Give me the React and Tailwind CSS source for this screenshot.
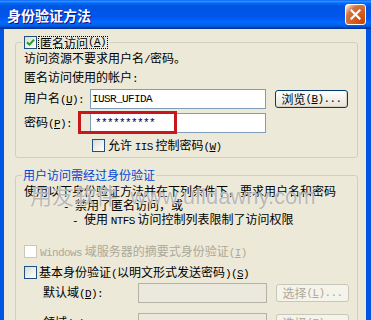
import React from "react";

const H = ({ children, className = "" }) => (
  <span className={`font-['Liberation_Mono',monospace] text-[11px] tracking-[-0.6px] ${className}`}>{children}</span>
);

const Check = ({ checked, disabled }) => (
  <span
    className={`w-[13px] h-[13px] border shrink-0 flex items-center justify-center ${
      disabled ? "border-[#cac8bb] bg-white" : "border-[#1c5180] bg-linear-to-br from-[#dcdcd5] to-white"
    }`}
  >
    {checked && (
      <svg width="9" height="9" viewBox="0 0 9 9">
        <path d="M1 4.2 L3.4 6.6 L8 1.8" stroke="#21a121" strokeWidth="2" fill="none" />
      </svg>
    )}
  </span>
);

const Btn = ({ children, disabled }) => (
  <div
    className={`w-[73px] h-[18px] rounded-[3px] border flex items-center justify-center leading-none ${
      disabled
        ? "border-[#c9c7ba] text-[#aca899] bg-[#f5f4ea]"
        : "border-[#003c74] bg-linear-to-b from-white to-[#e6e3d6] shadow-[inset_-1px_-1px_0_#d6d0c5]"
    }`}
  >
    {children}
  </div>
);

export default function App() {
  return (
    <div className="w-[371px] h-[320px] overflow-hidden flex flex-col bg-[#0055e5] font-['Noto_Sans_CJK_SC',sans-serif] text-[12px] text-black">
      <div className="h-[29px] shrink-0 flex items-center justify-between pl-[7px] pr-[5px] bg-[linear-gradient(to_bottom,#0058ee_0%,#3593ff_4%,#288eff_6%,#127dff_8%,#036ffc_10%,#0262ee_14%,#0057e5_20%,#0054e3_24%,#0055eb_56%,#005bf5_66%,#026afe_76%,#0062ef_86%,#0052d6_92%,#0040ab_96%,#003092_100%)]">
        <span className="text-white font-bold text-[14px] leading-none [text-shadow:1px_1px_#0f1089]">身份验证方法</span>
        <div className="w-[21px] h-[21px] rounded-[3px] border border-white flex items-center justify-center bg-[radial-gradient(circle_at_90%_90%,#cc4600_0%,#dc6527_55%,#cd7546_70%,#ffccb2_90%,#ffffff_100%)]">
          <svg width="11" height="11" viewBox="0 0 11 11">
            <path d="M1.5 1.5 L9.5 9.5 M9.5 1.5 L1.5 9.5" stroke="white" strokeWidth="2.2" strokeLinecap="square" />
          </svg>
        </div>
      </div>
      <div className="ml-[4px] w-[362px] flex-1 bg-[#ece9d8] pt-[7px] pl-[11px] relative overflow-hidden">
        <fieldset className="w-[343px] border border-[#d0d0bf] rounded-[3px] px-[8px] pb-[5px]">
          <legend className="ml-[-2px] px-[2px]">
            <div className="h-[13px] flex items-center">
              <Check checked />
              <span className="ml-[1px] h-[13px] px-[1px] border border-dotted border-black flex items-center leading-none">
                匿名访问<H>(<u>A</u>)</H>
              </span>
            </div>
          </legend>
          <div className="mt-[1px] h-[16px] leading-[16px]">访问资源不要求用户名<H>/</H>密码。</div>
          <div className="mt-[3px] h-[16px] leading-[16px]">匿名访问使用的帐户<H>:</H></div>
          <div className="mt-[4px] h-[20px] flex items-center">
            <span className="w-[66px]">用户名<H>(<u>U</u>):</H></span>
            <div className="w-[176px] h-[20px] border border-[#7f9db9] bg-white flex items-center pl-[1px]">
              <H>IUSR_UFIDA</H>
            </div>
            <div className="ml-[9px]">
              <Btn>浏览<H>(<u>B</u>)...</H></Btn>
            </div>
          </div>
          <div className="mt-[4px] h-[20px] flex items-center relative">
            <span className="w-[66px]">密码<H>(<u>P</u>):</H></span>
            <div className="w-[176px] h-[20px] border border-[#7f9db9] bg-white flex items-center pl-[4px]">
              <H>**********</H>
            </div>
            <div className="absolute left-[54px] top-[-2px] w-[99px] h-[23px] border-[3px] border-[#c8161d]"></div>
          </div>
          <div className="mt-[6px] h-[13px] flex items-center ml-[68px]">
            <Check />
            <span className="ml-[3px] leading-none">允许 <H>IIS</H> 控制密码<H>(<u>W</u>)</H></span>
          </div>
        </fieldset>

        <fieldset className="mt-[9px] w-[343px] h-[200px] border border-[#d0d0bf] rounded-[3px] px-[8px]">
          <legend className="ml-[-2px] px-[1px]">
            <div className="h-[16px] leading-[16px] text-[#0046d5]">用户访问需经过身份验证</div>
          </legend>
          <div className="mt-[1px] h-[14px] leading-[14px] whitespace-nowrap">使用以下身份验证方法并在下列条件下，要求用户名和密码</div>
          <div className="h-[14px] leading-[14px] whitespace-nowrap ml-[39px]"><H>- </H>禁用了匿名访问，或</div>
          <div className="h-[14px] leading-[14px] whitespace-nowrap ml-[48px]"><H>- </H>使用 <H>NTFS</H> 访问控制列表限制了访问权限</div>
          <div className="mt-[19px] h-[13px] flex items-center">
            <Check disabled />
            <span className="ml-[3px] leading-none text-[#aca899]"><H>Windows</H> 域服务器的摘要式身份验证<H>(<u>I</u>)</H></span>
          </div>
          <div className="mt-[8px] h-[13px] flex items-center">
            <Check />
            <span className="ml-[2px] leading-none">基本身份验证<H>(</H>以明文形式发送密码<H>)(<u>S</u>)</H></span>
          </div>
          <div className="mt-[4px] h-[20px] flex items-center">
            <span className="ml-[19px] w-[95px]">默认域<H>(<u>D</u>):</H></span>
            <div className="w-[129px] h-[20px] border border-[#b5b2a6] bg-[#ebe9dd]"></div>
            <div className="ml-[9px]">
              <Btn disabled>选择<H>(<u>L</u>)...</H></Btn>
            </div>
          </div>
          <div className="mt-[10px] h-[20px] flex items-center">
            <span className="ml-[19px] w-[95px]">领域<H>(<u>R</u>):</H></span>
            <div className="w-[129px] h-[20px] border border-[#b5b2a6] bg-[#ebe9dd]"></div>
            <div className="ml-[9px]">
              <Btn disabled>选择<H>(<u>E</u>)...</H></Btn>
            </div>
          </div>
        </fieldset>

        <div className="absolute left-[26px] top-[157px] whitespace-nowrap text-[22px] leading-none text-[#9a9a9a]/70 [text-shadow:0_0_1px_#ffffff] font-['Liberation_Sans','Noto_Sans_CJK_SC',sans-serif]">
          用友软件 <span className="ml-[6px]">www.ufidawny.com</span>
        </div>
      </div>
    </div>
  );
}
